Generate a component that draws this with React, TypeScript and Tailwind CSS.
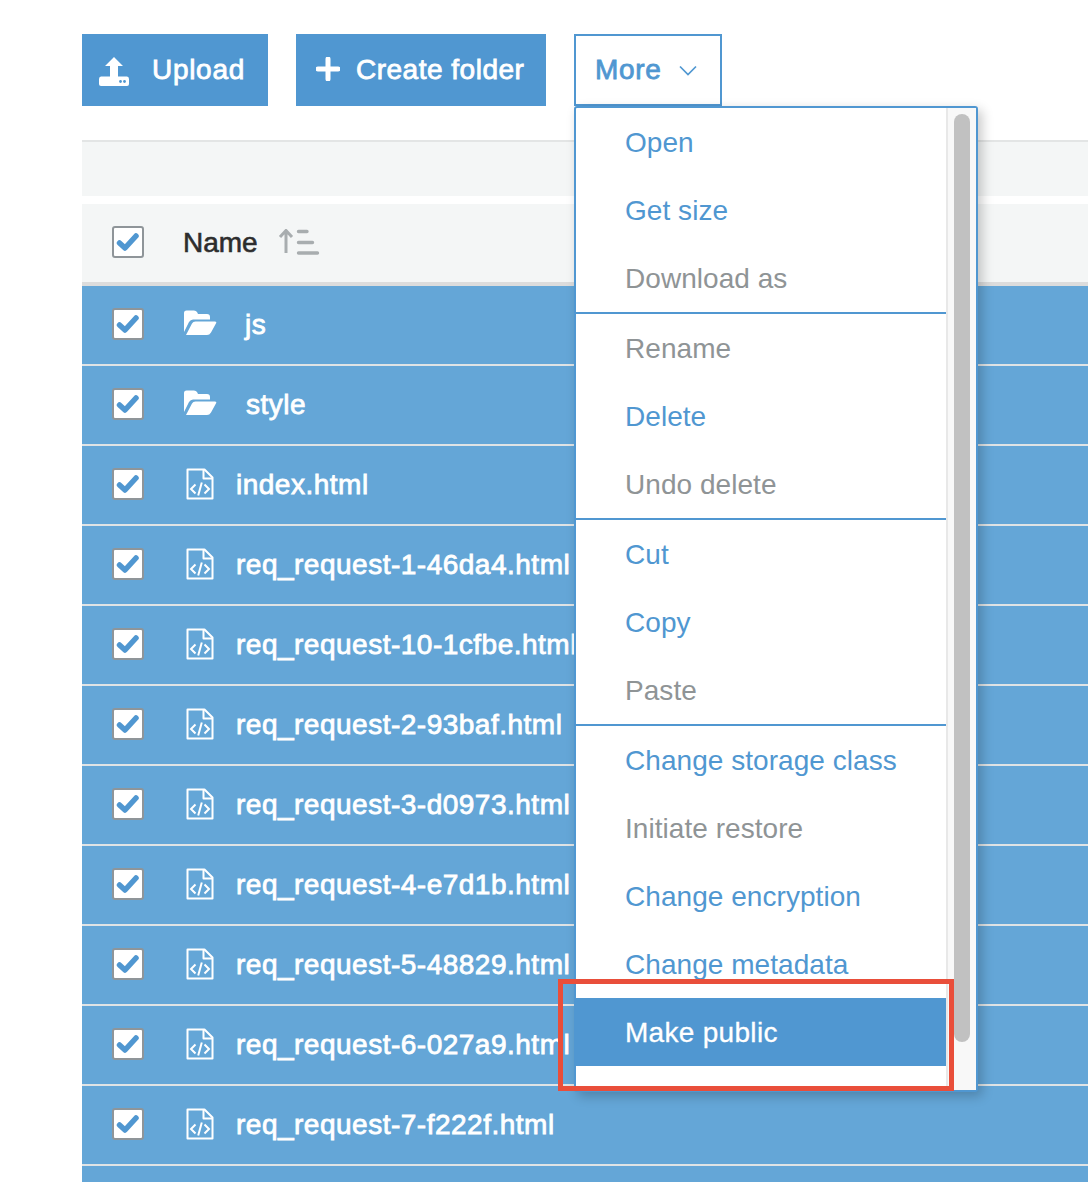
const font = "font-['Liberation_Sans',Arial,sans-serif]";

function Check() {
  return (
    <span className="-mt-[2px] flex h-[32px] w-[32px] shrink-0 items-center justify-center rounded-[3px] border-[2px] border-[#8f9599] bg-white">
      <svg width="24" height="24" viewBox="0 0 24 24">
        <path d="M3.5 13 L9 18 L20 6" fill="none" stroke="#5097d1" strokeWidth="5.5" strokeLinejoin="round" strokeLinecap="round" />
      </svg>
    </span>
  );
}

function FolderIcon() {
  return (
    <svg width="34" height="26" viewBox="0 0 34 26" className="-mt-[4px] shrink-0">
      <path d="M1 22 V3 Q1 0.5 3.5 0.5 H11 Q13 0.5 14 2 L15 4 H24 Q27 4 27 7 V9.5 H10 Q7.5 9.5 6 12 Z" fill="#fff" />
      <path d="M3 25 L9 13.5 Q10 11.5 12.5 11.5 H32 Q34 11.5 33.2 13 L28 22.5 Q26.5 25 24 25 Z" fill="#fff" />
    </svg>
  );
}

function FileIcon() {
  return (
    <svg width="28" height="32" viewBox="0 0 28 32" className="-mt-[2px] shrink-0" fill="none" stroke="#fff">
      <path d="M1.5 1.5 H18.5 L26.5 9.5 V30.5 H1.5 Z" strokeWidth="2" strokeLinejoin="round" />
      <path d="M17.5 1.5 V10.5 H26.5" strokeWidth="2" strokeLinejoin="round" />
      <path d="M9.5 16.5 L5 21 L9.5 25.5 M18.5 16.5 L23 21 L18.5 25.5 M15.8 14.5 L12.2 27.5" strokeWidth="2" />
    </svg>
  );
}

function Row({ name, folder, pad }: { name: string; folder?: boolean; pad: string }) {
  return (
    <div className="flex h-[80px] shrink-0 items-center border-b-[2px] border-[#dfe3e5] bg-[#64a6d7] pl-[30px]">
      <Check />
      <span className={folder ? "ml-[39px] flex" : "ml-[42px] flex"}>{folder ? <FolderIcon /> : <FileIcon />}</span>
      <span className={`${pad} whitespace-nowrap text-[28px] tracking-[0.5px] text-white [-webkit-text-stroke:0.8px_white]`}>{name}</span>
    </div>
  );
}

function Item({ label, kind }: { label: string; kind: "link" | "off" | "active" }) {
  const cls =
    kind === "link"
      ? "text-[#5097d1] tracking-[0.05px]"
      : kind === "off"
        ? "text-[#8f9496] tracking-[0.05px]"
        : "bg-[#5097d1] text-white tracking-[0.3px] [-webkit-text-stroke:0.3px_white]";
  return <div className={`flex h-[68px] shrink-0 items-center pl-[49px] pt-[2px] text-[28px] ${cls}`}>{label}</div>;
}

function Divider() {
  return <div className="h-[2px] shrink-0 bg-[#5097d1]" />;
}

function Menu() {
  return (
    <div className="absolute left-[574px] top-[106px] flex h-[986px] w-[404px] rounded-[3px] border-[2px] border-[#5097d1] bg-white shadow-[4px_4px_12px_rgba(0,0,0,0.22)]">
      <div className="flex w-[370px] flex-col">
        <Item label="Open" kind="link" />
        <Item label="Get size" kind="link" />
        <Item label="Download as" kind="off" />
        <Divider />
        <Item label="Rename" kind="off" />
        <Item label="Delete" kind="link" />
        <Item label="Undo delete" kind="off" />
        <Divider />
        <Item label="Cut" kind="link" />
        <Item label="Copy" kind="link" />
        <Item label="Paste" kind="off" />
        <Divider />
        <Item label="Change storage class" kind="link" />
        <Item label="Initiate restore" kind="off" />
        <Item label="Change encryption" kind="link" />
        <Item label="Change metadata" kind="link" />
        <Item label="Make public" kind="active" />
      </div>
      <div className="flex-1 border-l-[2px] border-[#e8e8e8] bg-[#f8f8f8] pl-[6px] pt-[6px]">
        <div className="h-[928px] w-[16px] rounded-full bg-[#c1c1c1]" />
      </div>
    </div>
  );
}

export default function App() {
  const files = [
    "index.html",
    "req_request-1-46da4.html",
    "req_request-10-1cfbe.html",
    "req_request-2-93baf.html",
    "req_request-3-d0973.html",
    "req_request-4-e7d1b.html",
    "req_request-5-48829.html",
    "req_request-6-027a9.html",
    "req_request-7-f222f.html",
  ];
  return (
    <div className={`${font} relative h-[1182px] w-[1088px] overflow-hidden bg-white pl-[82px] pt-[34px]`}>
      <div className="flex h-[72px] items-stretch">
        <div className="flex w-[186px] items-center bg-[#5097d1] pl-[17px] text-white">
          <svg width="30" height="30" viewBox="0 0 30 30" fill="#fff" className="mt-[3px] shrink-0">
            <path d="M15 0 L24 9 H19 V20 H11 V9 H6 Z" />
            <path d="M2 19.5 H28 Q30 19.5 30 22 V27 Q30 29 28 29 H2 Q0 29 0 27 V22 Q0 19.5 2 19.5 Z" />
            <circle cx="21.5" cy="24.5" r="1.4" fill="#5097d1" />
            <circle cx="25.5" cy="24.5" r="1.4" fill="#5097d1" />
          </svg>
          <span className="ml-[23px] text-[28px] tracking-[0.7px] [-webkit-text-stroke:0.8px_white]">Upload</span>
        </div>
        <div className="ml-[28px] flex w-[250px] items-center bg-[#5097d1] pl-[20px] text-white">
          <svg width="24" height="24" viewBox="0 0 24 24" className="-mt-[2px] shrink-0">
            <path d="M12 2 V22 M2 12 H22" stroke="#fff" strokeWidth="5" strokeLinecap="round" />
          </svg>
          <span className="ml-[16px] text-[28px] tracking-[0.5px] [-webkit-text-stroke:0.8px_white]">Create folder</span>
        </div>
        <div className="ml-[28px] flex w-[148px] items-center border-[2px] border-[#5097d1] pl-[19px] text-[#5097d1]">
          <span className="text-[28px] tracking-[0.7px] [-webkit-text-stroke:0.8px_#5097d1]">More</span>
          <svg width="18" height="11" viewBox="0 0 18 11" fill="none" className="ml-[17px] mt-[1px] shrink-0">
            <path d="M1 1.5 L9 9.5 L17 1.5" stroke="#5097d1" strokeWidth="1.7" />
          </svg>
        </div>
      </div>
      <div className="mt-[34px] h-[56px] border-t-[2px] border-[#e3e5e5] bg-[#f4f6f6]" />
      <div className="mt-[8px] flex h-[82px] items-center border-b-[4px] border-[#dcdcdc] bg-[#f4f6f6] pl-[30px]">
        <Check />
        <span className="ml-[39px] text-[28px] text-[#2d2d2d] [-webkit-text-stroke:0.6px_#2d2d2d]">Name</span>
        <svg width="42" height="28" viewBox="0 0 42 28" fill="none" className="ml-[20px] shrink-0">
          <path d="M8 24 V1.5 M2 8 L8 1.5 L14 8" stroke="#a8adaf" strokeWidth="3" />
          <path d="M20.5 2.5 H29 M20.5 13.5 H34.5 M20.5 24 H39.5" stroke="#a8adaf" strokeWidth="3.4" strokeLinecap="round" />
        </svg>
      </div>
      <div className="flex flex-col">
        <Row name="js" folder pad="ml-[28px]" />
        <Row name="style" folder pad="ml-[29px]" />
        {files.map((f) => (
          <Row key={f} name={f} pad="ml-[22px]" />
        ))}
        <div className="h-[80px] bg-[#64a6d7]" />
      </div>
      <Menu />
      <div className="absolute left-[558px] top-[979px] h-[112px] w-[396px] border-[5px] border-[#e94e3a]" />
    </div>
  );
}
